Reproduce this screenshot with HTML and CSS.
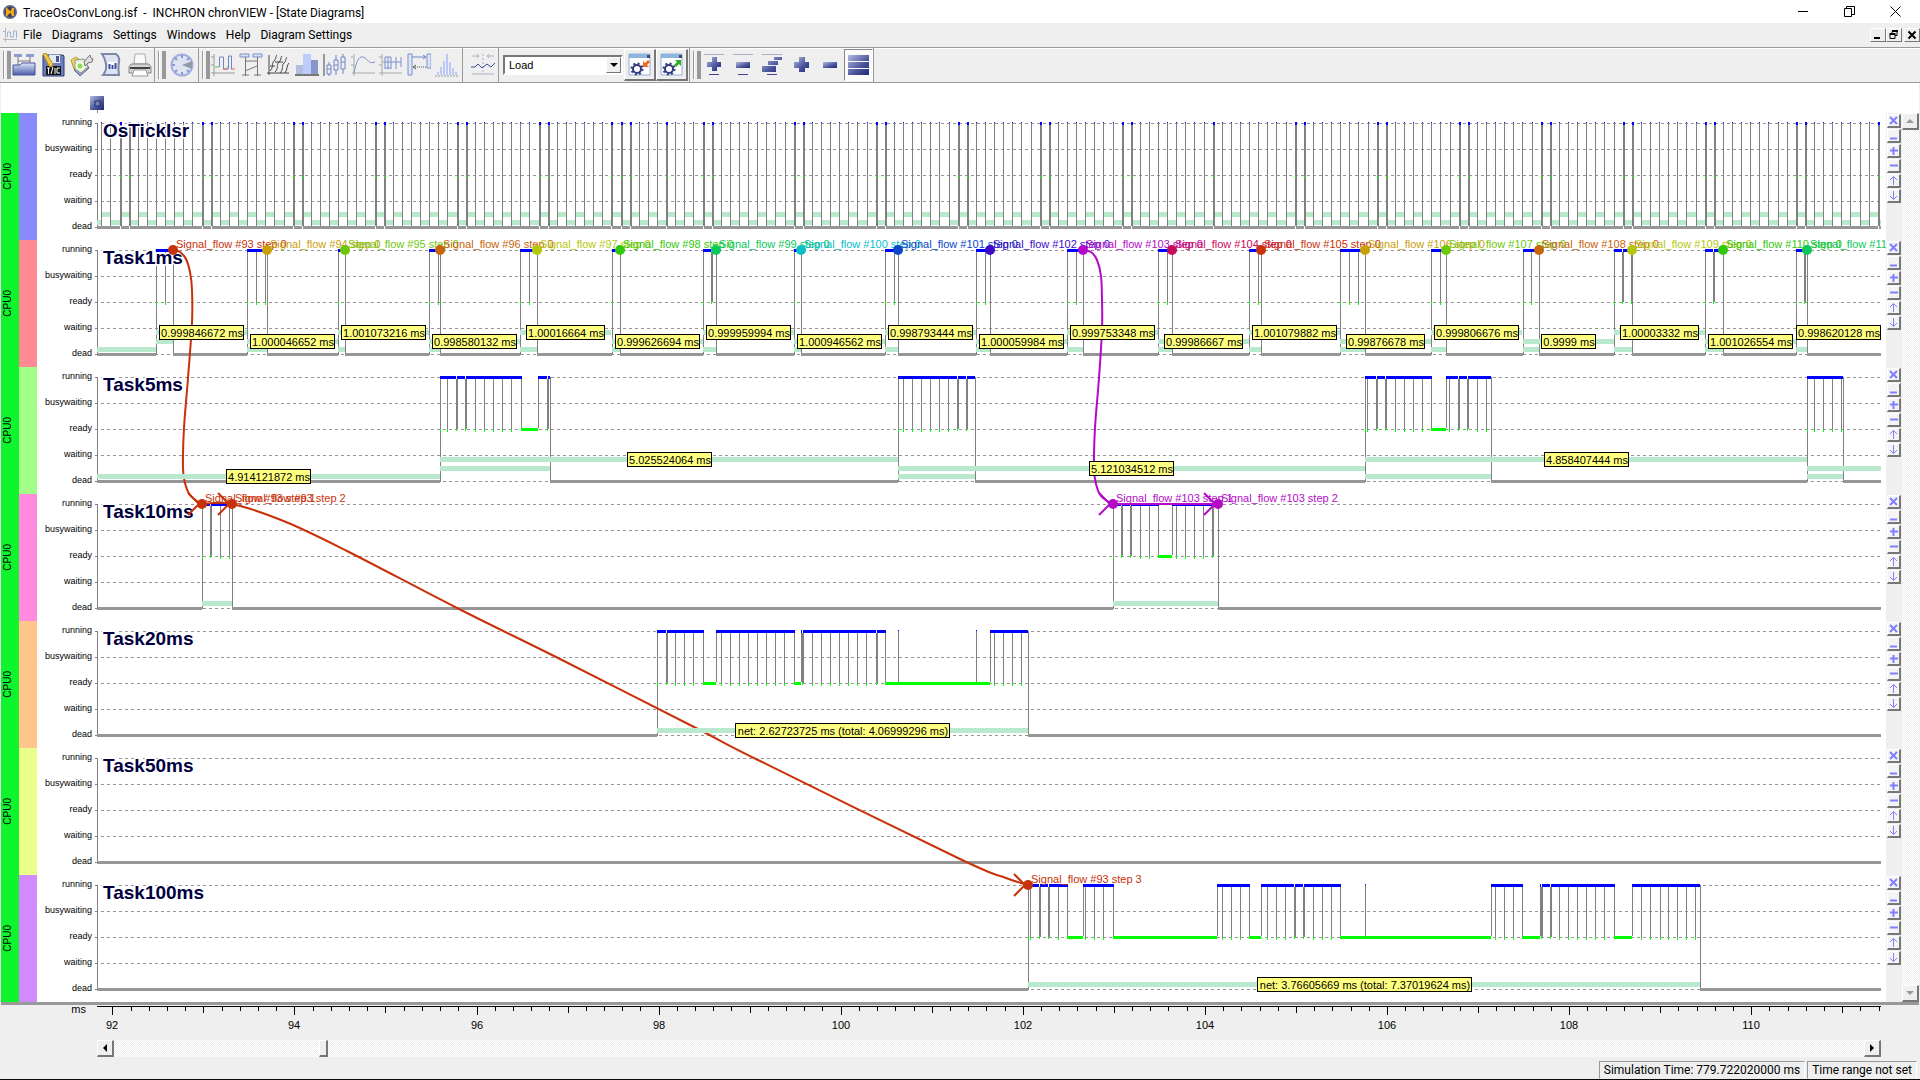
FILE: index.html
```
<!DOCTYPE html>
<html lang="en">
<head>
<meta charset="utf-8">
<title>TraceOsConvLong.isf - INCHRON chronVIEW - [State Diagrams]</title>
<link rel="stylesheet" href="styles.css">
</head>
<body>
<header class="titlebar">
  <svg class="app-icon" viewBox="0 0 16 16"><circle cx="8" cy="8" r="7" fill="#5d6680"/><circle cx="8" cy="8" r="5" fill="#33415f"/><path d="M4 3l5 5-5 5zM10 4h2v8h-2l-2-4z" fill="#f5a81c"/></svg>
  <h1 class="title">TraceOsConvLong.isf&nbsp; -&nbsp; INCHRON chronVIEW - [State Diagrams]</h1>
  <div class="window-controls">
    <button class="win-btn" aria-label="Minimize"><svg viewBox="0 0 11 11"><path d="M0 5.500h10"/></svg></button>
    <button class="win-btn" aria-label="Restore"><svg viewBox="0 0 11 11"><path d="M.5 2.500h7v8h-7zM2.500 2.500v-2h8v8h-3"/></svg></button>
    <button class="win-btn" aria-label="Close"><svg viewBox="0 0 11 11"><path d="M.5.5l10 10M10.500.5l-10 10"/></svg></button>
  </div>
</header>
<nav class="menubar">
  <svg class="doc-icon" viewBox="0 0 14 14"><path d="M2.500 0v14M0 11.500h14M0 3.500h3" stroke="#b8b8b8" fill="none"/><path d="M4.500 9V4h3v5h3V3h3v7" stroke="#9fb4d4" fill="none"/></svg>
  <a href="#file">File</a><a href="#diagrams">Diagrams</a><a href="#settings">Settings</a><a href="#windows">Windows</a><a href="#help">Help</a><a href="#diagram-settings">Diagram Settings</a>
  <div class="mdi-controls">
    <button class="mdi-btn" aria-label="Minimize document"><svg viewBox="0 0 10 10"><path d="M1 8h6" stroke-width="2"/></svg></button>
    <button class="mdi-btn" aria-label="Restore document"><svg viewBox="0 0 10 10"><path d="M1 4.500h5v4h-5zM3 4V1.500h5v4H6" stroke-width="1"/><path d="M.5 4h6M3 1h6" stroke-width="2"/></svg></button>
    <button class="mdi-btn mdi-close" aria-label="Close document"><svg viewBox="0 0 10 10"><path d="M1.500 1.500l7 7M8.500 1.500l-7 7" stroke-width="2"/></svg></button>
  </div>
</nav>
<svg class="defs" aria-hidden="true">
  <defs>
    <linearGradient id="navy" x1="0" y1="0" x2="1" y2="1"><stop offset="0" stop-color="#b4bce0"/><stop offset=".6" stop-color="#4a549c"/><stop offset="1" stop-color="#1e2878"/></linearGradient>
    <linearGradient id="pale" x1="0" y1="0" x2="0" y2="1"><stop offset="0" stop-color="#dde6fa"/><stop offset="1" stop-color="#4a5ca8"/></linearGradient>
  </defs>
</svg>
<div class="toolbar">
  <div class="group">
    <button class="tool" aria-label="Open"><svg viewBox="0 0 24 24"><path d="M2 1h8v3H2zM14 1h8v3h-8z" fill="#8a9cd0"/><path d="M6 4v9M18 4v9M6 8h12" stroke="#777" fill="none"/><path d="M1 12h7l2-2h13v12H1z" fill="url(#pale)" stroke="#46549c"/></svg></button>
    <button class="tool" aria-label="Save"><svg viewBox="0 0 24 24"><path d="M2 2h20l1 1v20H2z" fill="#6d7dc0" stroke="#333d70"/><path d="M8 2h11v8H8z" fill="#e4e9f6"/><path d="M15 3h3v6h-3z" fill="#4a5690"/><path d="M5 13h15v9H5z" fill="#151515"/><path d="M6 15h3M7.500 15v6M12 14l-2 7M14 15v6M19 15h-3v5h3" stroke="#fff" fill="none"/><path d="M2 1l3-1 7 11-1 3-3-1z" fill="#f3c945" stroke="#b08c28"/></svg></button>
    <button class="tool" aria-label="Options"><svg viewBox="0 0 24 24"><path d="M1 7l5-3 4 3-6 9z" fill="#f6d558" stroke="#b59a40"/><path d="M4 17l6 6 9-8-3-5z" fill="#8f9dc8" stroke="#5f6c98"/><path d="M5 7l9-1 4 8-7 6-6-4z" fill="#e2ecd8" stroke="#8a9a80"/><circle cx="10" cy="13" r="3.500" fill="#8edb54" stroke="#f4ffe8" stroke-width="2"/><path d="M14 9l4-5 2-2 1 3 2 1-1 3-4 1-3 3z" fill="#dcdcdc" stroke="#777"/></svg></button>
    <button class="tool" aria-label="Report"><svg viewBox="0 0 24 24"><path d="M3 1h14q4 3 3 8t0 13H4q4-5 3-11T3 1z" fill="#dde3f4" stroke="#7e87a8" stroke-width="2"/><path d="M9 9h9v7H9z" fill="#fff"/><path d="M10.500 11v5M13.500 12v4M16.500 10v6" stroke="#3a48a0" stroke-width="2"/></svg></button>
    <button class="tool" aria-label="Print"><svg viewBox="0 0 24 24"><path d="M7 1h10l1 10H6z" fill="#fafafa" stroke="#aaa"/><path d="M3 11h18l2 3v6H1v-6z" fill="#d4d4d4" stroke="#858585"/><path d="M2 15h20" stroke="#444" stroke-width="2"/><path d="M6 17h12l2 6H4z" fill="#fcfcfc" stroke="#999"/></svg></button>
  </div>
  <div class="group group-clock">
    <button class="tool" aria-label="Time range"><svg viewBox="0 0 24 24"><circle cx="12" cy="12" r="10.500" fill="#dfe3f3" stroke="#a3b0de" stroke-width="2"/><path d="M12 12l10-4v8z" fill="#9299a8"/><path d="M12 2v3M12 19v3M2 12h3M5 5l2 2M5 19l2-2M19 5l-2 2M19 19l-2-2" stroke="#8a9ad4" stroke-width="2"/></svg></button>
  </div>
  <div class="group group-views">
    <button class="tool" aria-label="State diagram"><svg viewBox="0 0 24 24" class="line"><path d="M3 1v22M0 20h24M0 4h3M0 12h3" stroke="#999"/><path d="M4 14h4M16 14h2" stroke="#4c4"/><path d="M8.500 14V4h4v12h5V3h3v13" stroke="#6f86c4"/><path d="M12 16h4M20 16h4" stroke="#d66"/></svg></button>
    <button class="tool" aria-label="Sequence diagram"><svg viewBox="0 0 24 24" class="line"><path d="M1 1h9v3H1zM14 1h9v3h-9z" stroke="#7c90cc" fill="#d8e0f6"/><path d="M6.500 4v19M18.500 4v19M6 8h12M6 18l12-5M3 22h7M15 22h7" stroke="#777"/></svg></button>
    <button class="tool" aria-label="Stack diagram"><svg viewBox="0 0 24 24" class="line"><path d="M2 2v20M0 20h22M3 18c4-4 1-7 4-10s1-4 3-6M8 19c4-4 1-7 4-10s1-4 3-6M13 20c4-4 1-7 4-10s1-4 3-6M18 20c3-4 1-7 4-10M3 13h5M8 9h8" stroke="#444"/></svg></button>
    <button class="tool" aria-label="Load diagram"><svg viewBox="0 0 24 24"><path d="M1 12h7v10H1z" fill="#b3bdde"/><path d="M8 1h8v21H8z" fill="#bcccfc"/><path d="M16 7h7v15h-7z" fill="#8795c8"/><path d="M0 22h24" stroke="#777" stroke-width="2"/></svg></button>
    <button class="tool" aria-label="Box plot"><svg viewBox="0 0 24 24" class="line"><path d="M1 1v22" stroke="#444"/><path d="M4 12h4v9H4zM11 7h4v10h-4zM18 4h4v12h-4zM6 9v3M6 21v2M13 2v5M13 17v5M20 1v3M20 16v5M4 16h4M11 12h4M18 9h4" stroke="#6f86c4"/></svg></button>
    <button class="tool" aria-label="Trend"><svg viewBox="0 0 24 24" class="line"><path d="M3 1v22M1 20h23M0 4h3M0 12h3" stroke="#aaa"/><path d="M3 20C6 4 10 2 14 5s4 6 10 4" stroke="#7c90cc"/></svg></button>
    <button class="tool" aria-label="Event diagram"><svg viewBox="0 0 24 24" class="line"><path d="M3 1v22M0 20h23M0 4h3M0 12h3" stroke="#aaa"/><path d="M4 9h18M6 4v12M9 4v12M12 4v12M17 4v12M22 4v10M6 4h6M6 15h6" stroke="#7c90cc"/></svg></button>
    <button class="tool" aria-label="Interval"><svg viewBox="0 0 24 24" class="line"><path d="M1 1h4v21H1zM20 1h4v14h-4z" stroke="#7c90cc" fill="#dfe6fa"/><path d="M5 4h14M16 2l3 2-3 2" stroke="#6f86c4"/><path d="M6 14h14" stroke="#555" stroke-dasharray="1 1"/><path d="M9 12l-3 2 3 2" stroke="#555"/></svg></button>
    <button class="tool" aria-label="Histogram"><svg viewBox="0 0 24 24"><path d="M3 19v3M6 14v8M9 8v14M12 1v21M15 9v13M18 15v7M21 19v3" stroke="#bcc9f6" stroke-width="2"/><path d="M0 23h24" stroke="#999" stroke-dasharray="2 1"/></svg></button>
  </div>
  <div class="group group-single">
    <button class="tool" aria-label="Center marker"><svg viewBox="0 0 24 24" class="line"><path d="M1 3h7M6 1l2 2-2 2M23 3h-7M18 1l-2 2 2 2M1 21h22" stroke="#aab0c4"/><path d="M12 1v20" stroke="#aab0c4" stroke-dasharray="2 2"/><path d="M0 14h4l3-3 4 4 5-4 4 3 4-4" stroke="#3d4c9c"/></svg></button>
  </div>
  <div class="group group-profile">
    <div class="combo"><select aria-label="Profile"><option>Load</option></select><span class="combo-arrow"></span></div>
    <button class="tool raised" aria-label="Load profile"><svg viewBox="0 0 24 24"><path d="M1 1h21v21H1z" fill="#fff" stroke="#8eaed8" stroke-width="1"/><path d="M1 1h21v4H1z" fill="#8eb4e0"/><path d="M19 2h3v3h-3z" fill="#446"/><circle cx="9" cy="16" r="4" fill="none" stroke="#323c7c" stroke-width="2"/><circle cx="9" cy="16" r="5.500" fill="none" stroke="#323c7c" stroke-width="2" stroke-dasharray="2 2.300"/><path d="M15 8v6h6l-2-2 3-3-2-2-3 3z" fill="#f4661e"/></svg></button>
    <button class="tool raised" aria-label="Store profile"><svg viewBox="0 0 24 24"><path d="M1 1h21v21H1z" fill="#fff" stroke="#8eaed8" stroke-width="1"/><path d="M1 1h21v4H1z" fill="#8eb4e0"/><path d="M19 2h3v3h-3z" fill="#446"/><circle cx="9" cy="16" r="4" fill="none" stroke="#323c7c" stroke-width="2"/><circle cx="9" cy="16" r="5.500" fill="none" stroke="#323c7c" stroke-width="2" stroke-dasharray="2 2.300"/><path d="M21 13V7h-6l2 2-3 3 2 2 3-3z" fill="#2cae1e"/></svg></button>
  </div>
  <div class="group group-zoom">
    <button class="tool" aria-label="Expand all"><svg viewBox="0 0 24 24"><path d="M2 1.500h20" stroke="#aab0c8"/><path d="M7 21.500h10" stroke="#3c4690"/><path d="M10 4h5v5h4v5h-4v4h-5v-4H5V9h5z" fill="url(#navy)"/></svg></button>
    <button class="tool" aria-label="Shrink all"><svg viewBox="0 0 24 24"><path d="M2 1.500h20" stroke="#aab0c8"/><path d="M7 21.500h10" stroke="#3c4690"/><path d="M5 9h14v6H5z" fill="url(#navy)"/></svg></button>
    <button class="tool" aria-label="Fit all"><svg viewBox="0 0 24 24"><path d="M2 1.500h20" stroke="#aab0c8"/><path d="M7 21.500h10" stroke="#3c4690"/><path d="M14 4h8v3h-8zM8 8h10v4H8zM2 13h14v6H2z" fill="url(#navy)"/></svg></button>
    <button class="tool" aria-label="Zoom in"><svg viewBox="0 0 24 24"><path d="M10 4h6v5h4v6h-4v4h-6v-4H5V9h5z" fill="url(#navy)"/></svg></button>
    <button class="tool" aria-label="Zoom out"><svg viewBox="0 0 24 24"><path d="M5 9h14v6H5z" fill="url(#navy)"/></svg></button>
    <button class="tool pressed" aria-label="Rows"><svg viewBox="0 0 24 24"><path d="M1 2h21v6H1zM1 9h21v6H1zM1 16h21v6H1z" fill="url(#navy)"/></svg></button>
  </div>
</div>
<main class="workspace">
  <div class="chart-head"><svg class="marker" viewBox="0 0 14 17"><path d="M0 0h14v14H0z" fill="url(#navy)"/><path d="M5 5h5v5H5z" fill="#7c84b4" stroke="#222a60"/><path d="M7.500 14v3" stroke="#888"/></svg></div>
  <div class="chart">
    <div class="bands" id="bands"></div>
    <svg class="plot" id="plot" role="img" aria-label="Task state diagrams"></svg>
    <div class="side" id="side"></div>
    <div class="vscroll"><button class="scroll-btn up" aria-label="Scroll up"></button><button class="scroll-btn down" aria-label="Scroll down"></button></div>
  </div>
</main>
<div class="axis"><span class="unit">ms</span><svg class="ruler" id="ruler" role="img" aria-label="Time axis"></svg></div>
<div class="hscroll"><button class="scroll-btn left" aria-label="Scroll left"></button><span class="thumb"></span><button class="scroll-btn right" aria-label="Scroll right"></button></div>
<footer class="statusbar"><span class="panel">Simulation Time: 779.722020000 ms</span><span class="panel">Time range not set</span></footer>
<script src="chart.js"></script>
</body>
</html>
```
FILE: styles.css
```
* { box-sizing: border-box; }
body {
  margin: 0;
  min-height: 100vh;
  display: flex;
  flex-direction: column;
  background: #efefef;
  border-bottom: 2px solid #0a0a0a;
  font-family: Roboto, "Open Sans", sans-serif;
  font-size: 12px;
  color: #000;
  overflow: hidden;
}
button { padding: 0; margin: 0; border: 0; background: none; font: inherit; }
svg { display: block; }
.defs { position: absolute; width: 0; height: 0; }

.titlebar { display: flex; align-items: center; height: 23px; background: #fff; padding: 0 2px; }
.app-icon { width: 16px; height: 16px; }
.title { margin: 2px 0 0 5px; font-size: 12px; font-weight: 400; line-height: 20px; white-space: nowrap; }
.window-controls { display: flex; margin-left: auto; }
.win-btn { width: 46px; height: 22px; display: grid; place-items: center; }
.win-btn svg { width: 11px; height: 11px; fill: none; stroke: #000; }

.menubar { display: flex; align-items: center; height: 24px; padding-left: 3px; }
.doc-icon { width: 14px; height: 14px; margin-right: 1px; }
.menubar a { color: #000; text-decoration: none; padding: 0 5px; line-height: 20px; }
.mdi-controls { display: flex; align-items: center; margin-left: auto; }
.mdi-btn {
  width: 16px; height: 14px; display: grid; place-items: center;
  border: 1px solid; border-color: #fff #777 #777 #fff;
}
.mdi-close { margin-left: 2px; }
.mdi-btn svg { width: 10px; height: 10px; fill: none; stroke: #000; }

.toolbar { display: flex; height: 36px; border-top: 1px solid #9a9a9a; border-bottom: 1px solid #9a9a9a; background: #efefef; box-shadow: inset 0 1px #fff; }
.group { display: flex; align-items: center; padding-left: 9px; border-right: 1px solid #9a9a9a; position: relative; }
.group::before {
  content: ""; width: 6px; height: 28px; position: absolute; left: 3px; top: 3px;
  border: 1px solid #999; border-width: 0 1px; background: linear-gradient(90deg, #fff 1px, #efefef 1px 3px, #999 3px 4px);
}
.tool { width: 29px; height: 32px; display: grid; place-items: center; }
.tool svg { width: 24px; height: 24px; }
.line { fill: none; }
.group-clock { padding: 0 2px 0 12px; }
.group-views .tool { width: 28px; }
.group-views { padding: 0 1px 0 10px; }
.group-single { padding: 0 1px 0 5px; }
.group-single::before, .group-profile::before { display: none; }
.group-profile { padding: 0 1px 0 4px; }
.combo { position: relative; width: 120px; height: 20px; margin-right: 1px; }
.combo select {
  appearance: none; width: 120px; height: 20px; padding: 0 4px; border-radius: 0; background: #fff;
  border: 2px solid; border-color: #777 #fff #fff #777; font: 11px "Liberation Sans", sans-serif; color: #000;
}
.combo-arrow { position: absolute; right: 2px; top: 2px; width: 15px; height: 16px; background: #efefef; border: 1px solid; border-color: #fff #777 #777 #fff; pointer-events: none; }
.combo-arrow::after { content: ""; position: absolute; left: 3px; top: 5px; border: 4px solid transparent; border-top-color: #000; border-bottom: 0; }
.raised { width: 32px; border: 1px solid; border-color: #fff #777 #777 #fff; border-right-width: 2px; border-bottom-width: 2px; }
.pressed { width: 29px; background: #fafafa; border: 1px solid; border-color: #888 #fff #fff #888; }

.workspace { background: #fff; margin: 0 1px; border-bottom: 3px solid #999; }
.chart-head { height: 30px; padding: 13px 0 0 89px; }
.marker { width: 14px; height: 17px; }
.chart { display: flex; }
.bands { width: 92px; flex: none; }
.band { display: grid; grid-template-columns: 18px 18px 1fr; height: 127px; }
.cpu { background: #0ff52d; display: grid; place-items: center; padding-right: 4px; font: 10px/12px "Liberation Sans", sans-serif; }
.cpu span { writing-mode: vertical-rl; rotate: 180deg; }
.states { margin: 0; padding: 4px 1px 0 0; list-style: none; display: grid; align-content: start; gap: 16px; text-align: right; font: 9px/10px "Liberation Sans", sans-serif; }
.plot { flex: 1; min-width: 0; height: 889px; }
.side { width: 16px; flex: none; background: #efefef; }
.side-group { height: 127px; padding: 1px 0 0 1px; display: grid; align-content: start; gap: 1px; }
.side-btn { width: 14px; height: 14px; background: #f4f4f4; border: 1px solid; border-color: #fff #777 #777 #fff; border-right-width: 2px; border-bottom-width: 2px; }
.side-btn svg { width: 11px; height: 11px; fill: none; stroke: #8080ff; }
.vscroll {
  width: 17px; flex: none; display: flex; flex-direction: column; justify-content: space-between;
  background: repeating-conic-gradient(#fff 0 25%, #efefef 0 50%) 0 0 / 2px 2px;
}
.scroll-btn { width: 17px; height: 17px; display: grid; place-items: center; background: #efefef; border: 1px solid; border-color: #fff #777 #777 #fff; border-right-width: 2px; border-bottom-width: 2px; }
.scroll-btn::after { content: ""; border: 4px solid transparent; }
.up::after { border-bottom-color: #999; border-top: 0; }
.down::after { border-top-color: #999; border-bottom: 0; }
.left::after { border-right-color: #000; border-left: 0; }
.right::after { border-left-color: #000; border-right: 0; }

.axis { display: flex; height: 35px; padding: 0 34px 0 0; font: 11px/12px "Liberation Sans", sans-serif; }
.unit { width: 93px; padding-right: 7px; flex: none; text-align: right; line-height: 8px; }
.ruler { flex: 1; min-width: 0; height: 35px; }
.hscroll {
  display: flex; height: 17px; margin: 0 39px 0 97px;
  background: repeating-conic-gradient(#fff 0 25%, #efefef 0 50%) 0 0 / 2px 2px;
}
.thumb { width: 9px; margin-left: 11.500%; background: #efefef; border: 1px solid; border-color: #fff #777 #777 #fff; border-right-width: 2px; border-bottom-width: 2px; }
.hscroll .right { margin-left: auto; }
.statusbar { display: flex; justify-content: flex-end; gap: 2px; padding: 0 3px 0 0; margin-top: 4px; line-height: 16px; }
.panel { border: 1px solid; border-color: #999 #fff #efefef #999; padding: 0 4px; white-space: nowrap; }

text { font-family: "Liberation Sans", sans-serif; }
.name { font-size: 19px; font-weight: 700; fill: #000040; stroke: #fff; stroke-width: 3px; paint-order: stroke; }
.flow-text, .tag-text { font-size: 11px; }
.tag-text { text-anchor: middle; }
.tag { fill: #ffff80; stroke: #000; }
.tick-text { font-size: 11px; text-anchor: middle; }
.grid { stroke: #969696; stroke-dasharray: 3 3; }
.edge { fill: #808080; }
.dead { fill: #969696; }
.run { fill: #0000ff; }
.ready { fill: #00ff00; }
.bar { fill: #b9e9cc; }
.gap { fill: #fff; }
.flow { fill: none; stroke-width: 2px; }
```
FILE: chart.js
```
const ROW = 127, LEFT = 97, RIGHT = 1881, PAD = 4;
const STATES = ['running', 'busywaiting', 'ready', 'waiting', 'dead'];
const RED = '#c8320a', VIOLET = '#b40ac8';

// Runs: s/e = activation and end, d = short preemptions, w = longer ones, r = ready spans, p = spikes inside a ready span
const task1 = [
  [172.7, [165], []], [267, [256, 265], []], [345, [], []], [440, [438], []], [537, [529], []], [620, [], []],
  [716, [], [711]], [801, [], []], [898, [894], []], [990, [985], []], [1083, [1076], []], [1172, [1167], []],
  [1261, [1258], []], [1365, [1349, 1358], []], [1446, [1440], []], [1539, [1531], []], [1632, [], [1622, 1631]],
  [1723, [], [1713]], [1807, [], [1804]]
].map(([e, d, w], i) => ({ s: 156 + 91.1 * i, e, d, w, r: [] }));

const times1 = ['0.999846672', '1.000046652', '1.001073216', '0.998580132', '1.00016664', '0.999626694', '0.999959994',
  '1.000946562', '0.998793444', '1.000059984', '0.999753348', '0.99986667', '1.001079882', '0.99876678', '0.999806676',
  '0.9999', '1.00003332', '1.001026554', '0.998620128'];
const colors = [RED, '#c8a00a', '#6ec80a', '#c8640a', '#b4c80a', '#32c80a', '#0ac85a', '#0abec8', '#0a46c8', '#3c0ac8',
  '#b40ac8', '#c80a5a', RED, '#c8a00a', '#6ec80a', '#c8640a', '#b4c80a', '#32c80a', '#0ac85a'];

const rows = [
  { name: 'OsTickIsr', color: '#8a8aff', runs: [], bars: [], tags: [] },
  { name: 'Task1ms', color: '#ff8a94', runs: task1,
    bars: [[97, 156, 107], [156, 173, 99]].concat(
      task1.map((t, i) => [t.s, i < 18 ? t.s + 91 : RIGHT, i % 2 ? 99 : 90]),
      task1.slice(1).map(t => [t.s, t.e, 107])),
    tags: times1.map((t, i) => [i < 18 ? 201 + 91.1 * i : 1838, i % 2 ? 94 : 85, t + ' ms']) },
  { name: 'Task5ms', color: '#a2ff8a', runs: [
      { s: 440, e: 550, d: [447, 475, 484, 493, 502, 511], w: [456, 465, 547], r: [[521, 538]] },
      { s: 898, e: 975, d: [903, 912, 921, 930, 939, 948], w: [957, 966], r: [] },
      { s: 1365, e: 1491, d: [1367, 1395, 1404, 1413, 1422, 1449, 1477, 1486], w: [1376, 1385, 1458, 1467], r: [[1431, 1446]] },
      { s: 1807, e: 1843, d: [1814, 1823, 1832, 1841], w: [], r: [] }],
    bars: [[97, 440, 107], [440, 898, 90], [440, 550, 99], [898, 1365, 99], [898, 975, 107], [1365, 1807, 90],
      [1365, 1491, 107], [1807, RIGHT, 99], [1807, 1843, 107]],
    tags: [[268, 102, '4.914121872 ms'], [669, 85, '5.025524064 ms'], [1131, 94, '5.121034512 ms'], [1586, 85, '4.858407444 ms']] },
  { name: 'Task10ms', color: '#ff8ade', runs: [
      { s: 202, e: 232, d: [220, 229], w: [210], r: [] },
      { s: 1113, e: 1218, d: [1140, 1149, 1176, 1185, 1194, 1203], w: [1121, 1130, 1212], r: [[1158, 1172]] }],
    bars: [[202, 232, 107], [1113, 1218, 107]], tags: [] },
  { name: 'Task20ms', color: '#ffc58a', runs: [
      { s: 657, e: 1028, d: [675, 684, 693, 721, 730, 739, 748, 757, 766, 775, 784, 812, 821, 830, 839, 848, 857, 866, 994, 1003, 1012, 1021],
        w: [666, 802, 876], r: [[703, 716], [794, 801], [885, 990]], p: [898, 976] }],
    bars: [[657, 1028, 107]], tags: [[842, 102, 'net: 2.62723725 ms (total: 4.06999296 ms)']] },
  { name: 'Task50ms', color: '#ecff8a', runs: [], bars: [], tags: [] },
  { name: 'Task100ms', color: '#d28aff', runs: [
      { s: 1028, e: 1700, d: [1030, 1058, 1085, 1094, 1103, 1222, 1231, 1240, 1267, 1276, 1285, 1313, 1322, 1331, 1495, 1504, 1513,
        1559, 1568, 1577, 1586, 1595, 1604, 1641, 1650, 1660, 1668, 1677, 1686, 1695],
        w: [1039, 1048, 1294, 1303, 1541, 1550],
        r: [[1067, 1083], [1113, 1217], [1249, 1261], [1340, 1491], [1522, 1540], [1614, 1632]], p: [1365] }],
    bars: [[1028, 1700, 107]], tags: [[1364, 102, 'net: 3.76605669 ms (total: 7.37019624 ms)']] }
];
const wideTicks = new Set([2, 3, 11, 12, 21, 22, 30, 31, 39, 40, 48, 49, 56, 57, 58, 62, 66, 67, 76, 77, 85, 86, 94, 95, 103, 104,
  112, 113, 122, 131, 132, 140, 141, 149, 150, 158, 159, 167, 168, 176, 177, 186, 187, 195]);

const plot = document.getElementById('plot');
const ruler = document.getElementById('ruler');
let scale = 1;
const X = v => Math.round(PAD + (v - LEFT) * scale);
const rect = (cls, x, y, w, h) => `<rect class="${cls}" x="${x}" y="${y}" width="${w}" height="${h}"/>`;
const span = (cls, a, b, y, h) => rect(cls, X(a), y, X(b) - X(a), h);

function drawTicks() {
  let out = '', fronts = '';
  for (let k = -1; k <= 195; k++) {
    const a = k < 0 ? LEFT : 101.3 + 9.11 * k, b = Math.min(101.3 + 9.11 * (k + 1), RIGHT);
    out += span('bar', a, b, k % 2 ? 107 : 99, 5);
    if (k < 0) continue;
    const wide = wideTicks.has(k);
    fronts += rect('edge', X(a), 10, wide ? 2 : 1, 103) + rect('run', X(a), 9, wide ? 2 : 1, wide ? 3 : 1);
    if (wide) fronts += rect('ready', X(a), 63, 1, 2) + rect('gap', X(a), 113, 1, 3);
  }
  return span('dead', LEFT, RIGHT, 113, 3) + out + fronts;
}

function drawRow(row, i) {
  let g = '';
  for (let s = 0; s < 5; s++) {
    const y = 10 + 26 * s;
    g += `<path class="grid" d="M${PAD + 4} ${y}.5H${X(RIGHT)}"/>` + rect('edge', PAD - 2, y, 3, 1);
  }
  g += rect('edge', PAD, 10, 1, 105);
  if (i === 0) return g + drawTicks();
  let from = LEFT;
  for (const r of row.runs) {
    g += span('dead', from, r.s, 113, 3) + span('run', r.s, r.e, 9, 3);
    g += rect('edge', X(r.s), 12, 1, 103) + rect('ready', X(r.s), 62, 1, 3) + rect('edge', X(r.e), 10, 1, 105);
    for (const [a, b] of r.r) {
      g += span('gap', a + 1, b, 9, 3) + span('ready', a, b, 61, 3) + rect('edge', X(a), 12, 1, 49) + rect('edge', X(b), 12, 1, 49);
    }
    for (const d of r.d) g += rect('edge', X(d), 12, 1, 51) + rect('ready', X(d), 62, 1, 3);
    for (const d of r.w) g += rect('gap', X(d), 9, 1, 3) + rect('edge', X(d), 12, 2, 50) + rect('ready', X(d), 61, 1, 3);
    for (const d of r.p || []) g += rect('edge', X(d), 10, 1, 51) + rect('run', X(d), 9, 1, 1);
    from = r.e;
  }
  return g + span('dead', from, RIGHT, 113, 3);
}

const curve = (pts, color) => {
  const p = pts.map(([x, y]) => [X(x), y - 113]);
  let d = `M${p[0]}`;
  for (let i = 0; i < p.length - 1; i++) {
    const a = p[Math.max(i - 1, 0)], b = p[i], c = p[i + 1], e = p[Math.min(i + 2, p.length - 1)];
    d += `C${b[0] + (c[0] - a[0]) / 6} ${b[1] + (c[1] - a[1]) / 6} ${c[0] - (e[0] - b[0]) / 6} ${c[1] - (e[1] - b[1]) / 6} ${c}`;
  }
  return `<path class="flow" stroke="${color}" d="${d}"/>`;
};
const arrow = (x, y, color) => `<path class="flow" stroke="${color}" d="M${X(x) - 14} ${y - 11}L${X(x) - 3} ${y}L${X(x) - 14} ${y + 11}"/>`;
const dot = (x, y, color, text) => `<circle cx="${X(x)}" cy="${y}" r="5" fill="${color}"/><text class="flow-text" x="${X(x) + 3}" y="${y - 2}" fill="${color}">${text}</text>`;

function draw() {
  scale = (plot.clientWidth - 9) / (RIGHT - LEFT);
  let base = '', over = '', names = '';
  rows.forEach((row, i) => {
    base += `<g transform="translate(0 ${i * ROW})" shape-rendering="crispEdges">${drawRow(row, i)}</g>`;
    over += `<g transform="translate(0 ${i * ROW})">` + row.bars.map(b => span('bar', b[0], b[1], b[2], 5)).join('') +
      row.tags.map(([c, y, t]) => {
        const w = t.length > 20 ? 214 : 84 - 6 * (14 - t.length), x = Math.round(X(c) - w / 2);
        return `<rect class="tag" x="${x}.5" y="${y}.5" width="${w}" height="14"/><text class="tag-text" x="${x + w / 2 + 1}" y="${y + 12}">${t}</text>`;
      }).join('') + '</g>';
    names += `<text class="name" x="${PAD + 6}" y="${i * ROW + 24}">${row.name}</text>`;
  });
  const lines =
    curve([[173, 250], [180, 252], [186, 259], [190, 272], [192, 290], [192, 323], [188, 378], [184, 428], [183, 468], [185, 483], [190, 495], [201, 504]], RED) +
    curve([[1083, 250], [1091, 252], [1097, 260], [1101, 276], [1102, 300], [1102, 330], [1099, 378], [1095, 428], [1094, 468], [1096, 484], [1101, 496], [1112, 504]], VIOLET) +
    curve([[202, 504], [232, 504], [286, 522], [347, 551], [457, 608], [562, 660], [696, 728], [758, 760], [960, 859], [1006, 878], [1028, 885]], RED) +
    curve([[1113, 504], [1218, 504]], VIOLET) +
    arrow(202, 391, RED) + arrow(232, 391, RED) + arrow(1028, 772, RED) + arrow(1113, 391, VIOLET) + arrow(1218, 391, VIOLET);
  const dots = task1.map((t, i) => dot(t.e, 137, colors[i], `Signal_flow #${93 + i} step 0`)).join('') +
    dot(202, 391, RED, 'Signal_flow #93 step 1') + dot(232, 391, RED, 'Signal_flow #93 step 2') +
    dot(1113, 391, VIOLET, 'Signal_flow #103 step 1') + dot(1218, 391, VIOLET, 'Signal_flow #103 step 2') +
    dot(1028, 772, RED, 'Signal_flow #93 step 3');
  plot.innerHTML = base + names + lines + over + dots;

  let ticks = span('axis-line', LEFT, RIGHT, 1, 1);
  for (let k = 0; k <= 97; k++) {
    const x = X(112.3 + 18.21 * k);
    ticks += rect('axis-tick', x, 1, 1, k % 10 === 0 ? 9 : k % 5 === 0 ? 7 : 5);
    if (k % 10 === 0) ticks += `<text class="tick-text" x="${x}" y="24">${92 + k / 5}</text>`;
  }
  ruler.innerHTML = ticks;
}

document.getElementById('bands').innerHTML = rows.map(r =>
  `<div class="band"><div class="cpu"><span>CPU0</span></div><div style="background:${r.color}"></div><ul class="states">${STATES.map(s => `<li>${s}</li>`).join('')}</ul></div>`).join('');
const glyphs = [['Close', 'M2 2l7 7M9 2l-7 7'], ['Minimize', 'M2 8.500h7'], ['Enlarge', 'M2 5.500h8M5.500 2v8'], ['Reduce', 'M2 5.500h8'],
  ['Move up', 'M5.500 10V2M2 5l3.500-3.500L9 5'], ['Move down', 'M5.500 1v8M2 6l3.500 3.500L9 6']];
document.getElementById('side').innerHTML = rows.map(r => '<div class="side-group">' + glyphs.map(([n, d], i) =>
  `<button class="side-btn" aria-label="${n} ${r.name}"><svg viewBox="0 0 11 11"><path d="${d}" stroke-width="${i < 4 ? 2 : 1}"/></svg></button>`).join('') + '</div>').join('');
draw();
addEventListener('resize', draw);
```
